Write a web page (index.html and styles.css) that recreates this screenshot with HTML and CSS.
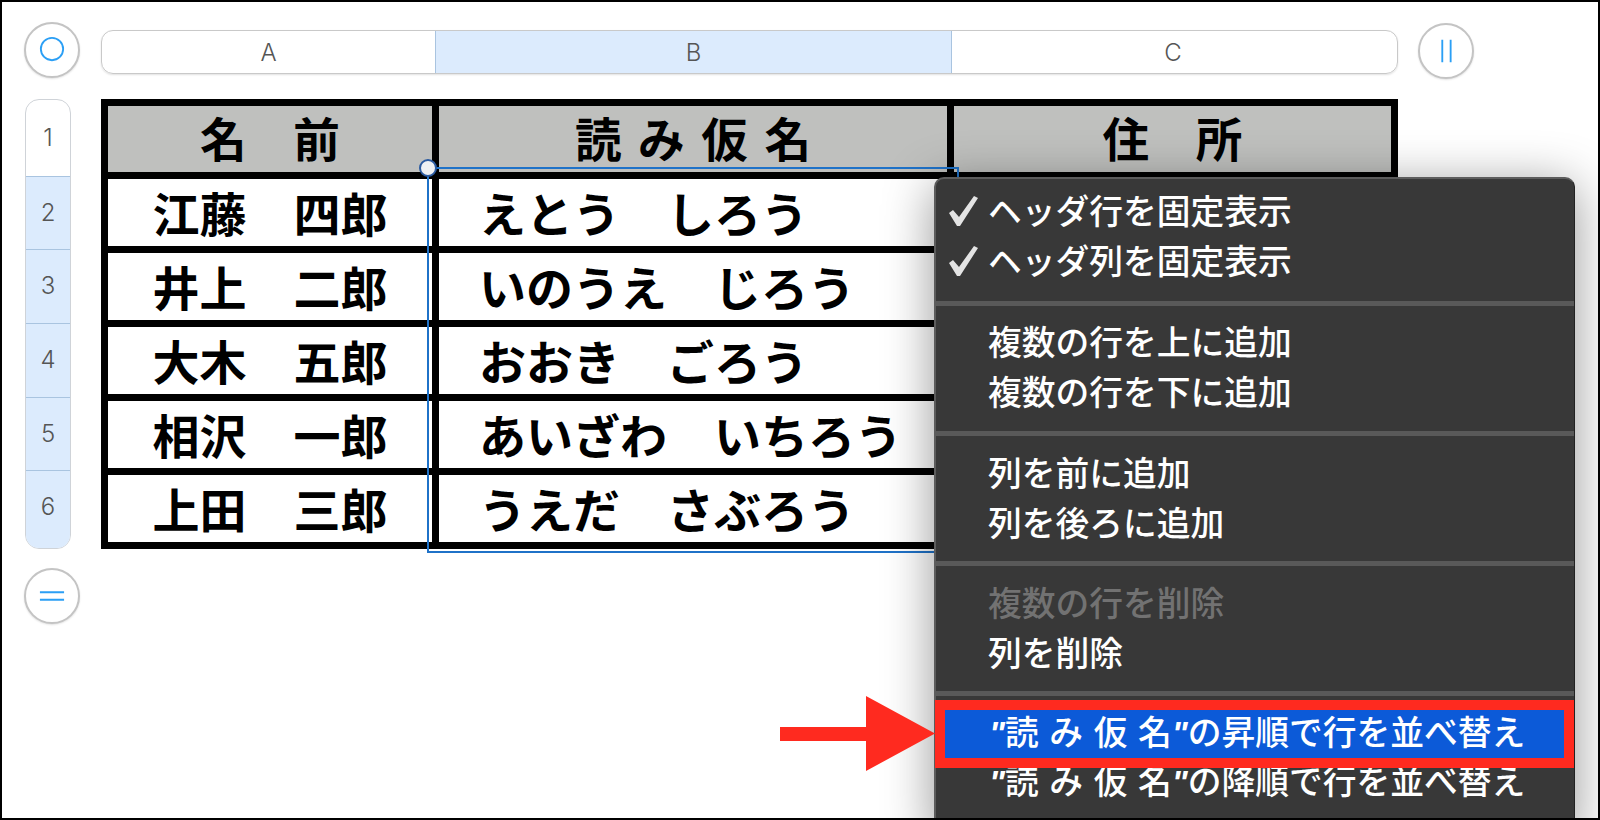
FILE: index.html
```html
<!DOCTYPE html>
<html lang="ja">
<head>
<meta charset="utf-8">
<title>読み仮名の昇順で行を並べ替え</title>
<link rel="stylesheet" href="styles.css">
</head>
<body>
<div class="page">
  <div class="sheet">
    <button class="round round-top" type="button" aria-label="表全体を選択">
      <svg class="glyph" viewBox="0 0 56 56"><circle cx="28" cy="27" r="12" fill="none" stroke="#2b9ff5" stroke-width="2"/></svg>
    </button>
    <div class="col-bar">
      <div class="col-head">A</div>
      <div class="col-head col-head-on">B</div>
      <div class="col-head col-head-last">C</div>
    </div>
    <button class="round round-side" type="button" aria-label="列を追加">
      <svg class="glyph" viewBox="0 0 56 56"><path d="M24 16V40M33 16V40" fill="none" stroke="#2b9ff5" stroke-width="2"/></svg>
    </button>

    <div class="row-bar">
      <div class="row-head">1</div>
      <div class="row-head row-head-on">2</div>
      <div class="row-head row-head-on">3</div>
      <div class="row-head row-head-on">4</div>
      <div class="row-head row-head-on">5</div>
      <div class="row-head row-head-on row-head-last">6</div>
    </div>

    <div class="table-wrap">
      <div class="table">
        <div class="cell th">名　前</div>
        <div class="cell th th-kana">読 み 仮 名</div>
        <div class="cell th">住　所</div>

        <div class="cell name">江藤　四郎</div>
        <div class="cell kana">えとう　しろう</div>
        <div class="cell"></div>

        <div class="cell name">井上　二郎</div>
        <div class="cell kana">いのうえ　じろう</div>
        <div class="cell"></div>

        <div class="cell name">大木　五郎</div>
        <div class="cell kana">おおき　ごろう</div>
        <div class="cell"></div>

        <div class="cell name">相沢　一郎</div>
        <div class="cell kana">あいざわ　いちろう</div>
        <div class="cell"></div>

        <div class="cell name">上田　三郎</div>
        <div class="cell kana">うえだ　さぶろう</div>
        <div class="cell"></div>
      </div>
      <div class="selection"><span class="handle"></span></div>
    </div>
    <div class="side-gap"></div>

    <button class="round round-bottom" type="button" aria-label="行を追加">
      <svg class="glyph" viewBox="0 0 56 56"><path d="M15 24H41M15 32H41" fill="none" stroke="#2b9ff5" stroke-width="2"/></svg>
    </button>
  </div>

  <svg class="arrow" viewBox="0 0 155 75" aria-hidden="true"><polygon points="0,31 86,31 86,0 155,37.5 86,75 86,45 0,45" fill="#ff2a1f"/></svg>

  <div class="menu">
    <div class="group group-first">
      <div class="item"><svg class="tick" viewBox="0 0 30 30"><path d="M0 17L4 14L10 21L25 0L29 2L11 30H8Z" fill="#e4e4e4"/></svg><span class="label">ヘッダ行を固定表示</span></div>
      <div class="item"><svg class="tick" viewBox="0 0 30 30"><path d="M0 17L4 14L10 21L25 0L29 2L11 30H8Z" fill="#e4e4e4"/></svg><span class="label">ヘッダ列を固定表示</span></div>
    </div>
    <div class="group group-a">
      <div class="item"><span class="label">複数の行を上に追加</span></div>
      <div class="item"><span class="label">複数の行を下に追加</span></div>
    </div>
    <div class="group">
      <div class="item"><span class="label">列を前に追加</span></div>
      <div class="item"><span class="label">列を後ろに追加</span></div>
    </div>
    <div class="group">
      <div class="item item-off"><span class="label">複数の行を削除</span></div>
      <div class="item"><span class="label">列を削除</span></div>
    </div>
    <div class="group group-last">
      <div class="item item-on"><span class="label sort"><span class="quote">"</span>読 み 仮 名<span class="quote">"</span>の昇順で行を並べ替え</span></div>
      <div class="item"><span class="label sort"><span class="quote">"</span>読 み 仮 名<span class="quote">"</span>の降順で行を並べ替え</span></div>
    </div>
  </div>
</div>
</body>
</html>
```

FILE: styles.css
```css
* { box-sizing: border-box; }

html, body {
  margin: 0;
  padding: 0;
  background: #fff;
}

body {
  font-family: "Noto Sans CJK JP", "Liberation Sans", sans-serif;
}

.page {
  position: relative;
  width: 1600px;
  height: 820px;
  border: 2px solid #000;
  background: #fff;
  overflow: hidden;
}

.sheet {
  display: grid;
  grid-template-columns: 57px 1297px 56px;
  grid-template-rows: 58px 450px 56px;
  column-gap: 20px;
  row-gap: 19px;
  padding: 20px 0 0 22px;
}

.round {
  display: block;
  width: 56px;
  height: 56px;
  padding: 0;
  border: 2px solid #c4c4c4;
  border-radius: 50%;
  background: #fff;
  box-shadow: 0 1px 2px rgba(0, 0, 0, .12);
}

.glyph {
  display: block;
  width: 52px;
  height: 52px;
}

.round-side {
  margin-top: 1px;
}

.col-bar {
  display: grid;
  grid-template-columns: 333px 517px 447px;
  height: 44px;
  margin-top: 8px;
  border: 1px solid #c9c9c9;
  border-radius: 12px;
  overflow: hidden;
  box-shadow: 0 1px 2px rgba(0, 0, 0, .12);
}

.col-head {
  display: flex;
  align-items: center;
  justify-content: center;
  font-family: Inter, "Liberation Sans", sans-serif;
  font-size: 24px;
  font-weight: 300;
  color: #555;
}

.col-head-on {
  background: #dcebfd;
  border-left: 1px solid #a9c4e0;
  border-right: 1px solid #a9c4e0;
}

.col-head-last {
  padding-right: 5px;
}

.row-bar {
  display: grid;
  grid-template-rows: 76px 73px 74px 74px 73px 80px;
  width: 46px;
  margin-left: 1px;
  border: 1px solid #cfd3d8;
  border-radius: 14px;
  overflow: hidden;
}

.row-head {
  display: flex;
  align-items: center;
  justify-content: center;
  padding-bottom: 2px;
  font-family: Inter, "Liberation Sans", sans-serif;
  font-size: 24px;
  font-weight: 300;
  color: #555;
}

.row-head-on {
  background: #dcebfd;
  border-top: 1px solid #a9c4e0;
}

.row-head-last {
  padding-bottom: 8px;
}

.table-wrap {
  position: relative;
}

.table {
  display: grid;
  grid-template-columns: 324px 508px 437px;
  grid-template-rows: 66px repeat(5, 67px);
  gap: 7px;
  width: 1297px;
  height: 450px;
  padding: 7px;
  background: #000;
}

.cell {
  display: flex;
  align-items: center;
  padding-bottom: 3px;
  background: #fff;
  font-size: 47px;
  font-weight: 700;
  line-height: 1;
  color: #000;
  white-space: nowrap;
}

.th {
  justify-content: center;
  padding-bottom: 4px;
  background: #bfc0be;
  font-size: 46.6px;
}

.th-kana {
  word-spacing: 6px;
}

.name {
  justify-content: center;
}

.kana {
  padding-left: 40px;
}

.selection {
  position: absolute;
  left: 326px;
  top: 68px;
  width: 532px;
  height: 386px;
  border: 2px solid #1f72c8;
}

.handle {
  position: absolute;
  left: -10px;
  top: -10px;
  width: 18px;
  height: 18px;
  border: 2px solid #2b5aa0;
  border-radius: 50%;
  background: #eef0f3;
}

.arrow {
  position: absolute;
  left: 778px;
  top: 694px;
  width: 155px;
  height: 75px;
  z-index: 2;
}

.menu {
  position: absolute;
  left: 932px;
  top: 175px;
  width: 641px;
  height: 660px;
  z-index: 1;
  background: #383838;
  border: 2px solid #5c5c5c;
  border-right: 1px solid #222;
  border-radius: 10px;
  box-shadow: 0 8px 50px rgba(0, 0, 0, .42);
}

.group {
  padding: 12px 0 13px;
  border-bottom: 5px solid #595959;
}

.group-first {
  padding: 7px 0 15px;
}

.group-a {
  padding: 11px 0 14px;
}

.group-last {
  padding: 14px 0 0;
  border-bottom: 0;
}

.item {
  display: grid;
  grid-template-columns: 52px 1fr;
  align-items: center;
  height: 50px;
  font-size: 33.75px;
  font-weight: 500;
  line-height: 1;
  color: #fff;
  white-space: nowrap;
}

.label {
  grid-column: 2;
  grid-row: 1;
  padding-bottom: 3px;
}

.tick {
  grid-column: 1;
  grid-row: 1;
  width: 30px;
  height: 30px;
  margin-left: 13px;
}

.item-off {
  color: #727272;
}

.sort {
  padding-left: 1px;
  word-spacing: 3px;
}

.quote {
  font-family: "Liberation Sans", sans-serif;
  font-style: italic;
  font-weight: 700;
}

.item-on {
  position: relative;
  height: 48px;
  background: #0c5ad8;
}

.item-on::after {
  content: "";
  position: absolute;
  left: -1px;
  right: 0;
  top: -10px;
  bottom: -10px;
  border: 10px solid #ff2a1f;
}
```
